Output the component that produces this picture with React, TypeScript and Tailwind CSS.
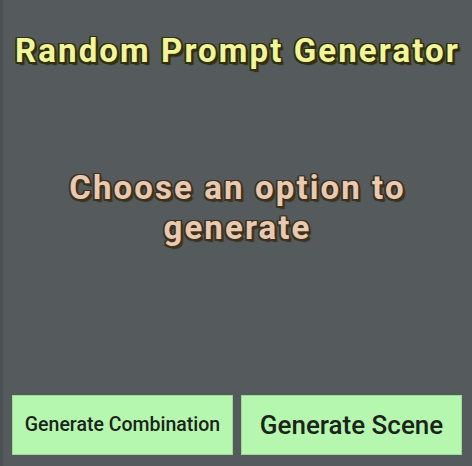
export default function App() {
  return (
    <div
      className="flex h-[466px] w-[472px] flex-col bg-[#555b5d] border-l-[3px] border-[#4b5052]"
      style={{ fontFamily: "Roboto, 'Liberation Sans', sans-serif" }}
    >
      <h1 className="mt-[31px] whitespace-nowrap text-center text-[33px] font-bold leading-[40px] tracking-[2.1px] text-[#f3f59d] [text-shadow:_1.5px_1.5px_0_#2f300c,_-1.5px_-1.5px_0_#2f300c,_1.5px_-1.5px_0_#2f300c,_-1.5px_1.5px_0_#2f300c,_0_1.5px_0_#2f300c,_0_-1.5px_0_#2f300c,_1.5px_0_0_#2f300c,_-1.5px_0_0_#2f300c,_2.5px_2.5px_1px_#2f300c]">
        Random Prompt Generator
      </h1>

      <div className="flex flex-1 items-start justify-center pt-[97px]">
        <p className="w-[400px] text-center text-[33px] font-bold leading-[40px] tracking-[2.1px] text-[#e9c9b1] [text-shadow:_1.5px_1.5px_0_#3b3320,_-1.5px_-1.5px_0_#3b3320,_1.5px_-1.5px_0_#3b3320,_-1.5px_1.5px_0_#3b3320,_0_1.5px_0_#3b3320,_0_-1.5px_0_#3b3320,_1.5px_0_0_#3b3320,_-1.5px_0_0_#3b3320,_2.5px_2.5px_1px_#3b3320]">
          Choose an option to generate
        </p>
      </div>

      <div className="mb-[11px] flex gap-[8px] pl-[9px] pr-[10px]">
        <button className="flex h-[60px] w-[221px] items-center justify-center border border-[#9fd69a] bg-[#b5f7ae] text-[19.5px] font-medium text-[#1b241b]">
          Generate Combination
        </button>
        <button className="flex h-[60px] flex-1 items-center justify-center border border-[#9fd69a] bg-[#b5f7ae] text-[26px] font-medium text-[#1b241b]">
          Generate Scene
        </button>
      </div>
    </div>
  );
}
